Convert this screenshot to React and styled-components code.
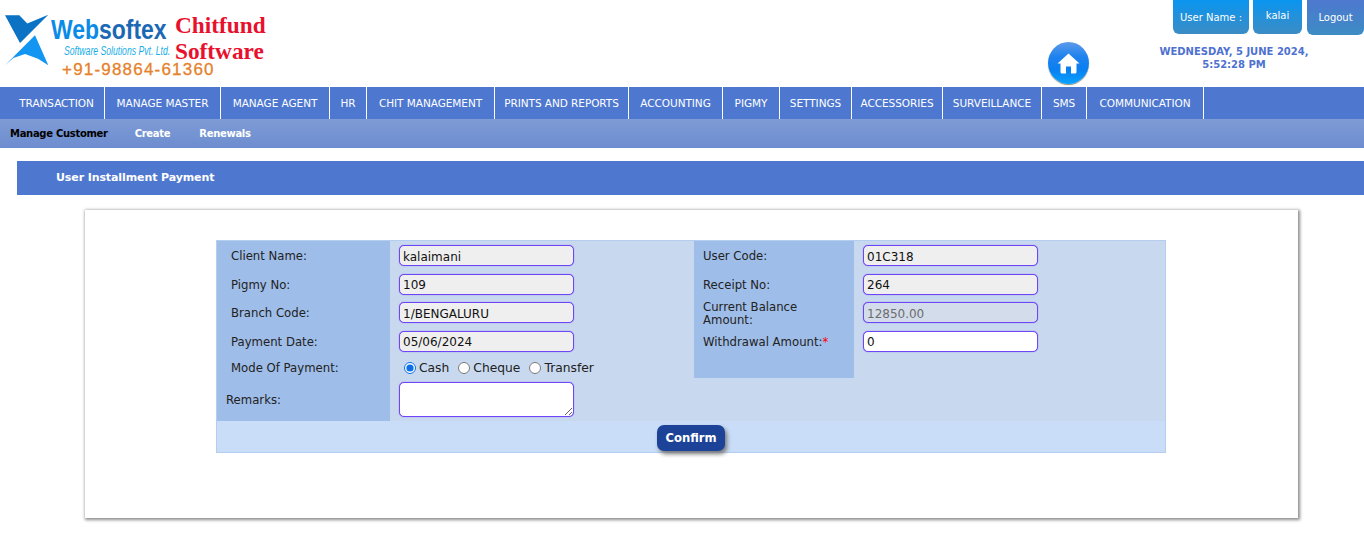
import React from 'react'
import styled, { createGlobalStyle } from 'styled-components'

const GlobalStyle = createGlobalStyle`
  html, body {
    margin: 0;
    padding: 0;
    background: #fff;
    font-family: 'DejaVu Sans', Verdana, sans-serif;
  }
  * {
    box-sizing: border-box;
  }
`

const Page = styled.div`
  width: 1364px;
  height: 534px;
  overflow: hidden;
`

const Header = styled.header`
  display: flex;
  height: 87px;
`

const Brand = styled.div`
  display: flex;
  width: 1048px;
  padding: 14px 0 0 5px;
`

const BrandCopy = styled.div`
  display: flex;
  flex-direction: column;
  width: 124px;
  white-space: nowrap;
`

const CompanyName = styled.div`
  margin-top: 2px;
  font: bold 27px/28px 'Liberation Sans', Arial, sans-serif;
  color: #0b8be8;
  transform: scaleX(0.85);
  transform-origin: left;

  span {
    color: #1b68b4;
  }
`

const Tagline = styled.div`
  margin: 1px 0 0 13px;
  font: italic 12px/13px 'Liberation Sans', Arial, sans-serif;
  color: #17aee8;
  transform: scaleX(0.72);
  transform-origin: left;
`

const Phone = styled.div`
  margin: 3px 0 0 11px;
  font: 17px/18px 'Liberation Sans', Arial, sans-serif;
  letter-spacing: 1.2px;
  -webkit-text-stroke: 0.3px #e6812a;
  color: #e6812a;
`

const ProductColumn = styled.div`
  margin-top: -2px;
`

const ProductName = styled.div`
  font: bold 23.3px/26px 'Liberation Serif', 'Times New Roman', serif;
  color: #e8112d;
`

const HomeLink = styled.div`
  width: 41px;
  height: 42px;
  margin-top: 42px;
  border-radius: 50%;
  display: flex;
  align-items: center;
  justify-content: center;
  background: linear-gradient(#5c9bea 0%, #1f82ee 35%, #0a7ff0 65%, #08a2ff 100%);
  box-shadow: 0 1px 1px #8a8a80;
`

const HeaderRight = styled.div`
  flex: 1;
  display: flex;
  flex-direction: column;
  align-items: flex-end;
`

const UserBar = styled.div`
  display: flex;
  align-items: flex-start;
`

const UserChip = styled.div`
  display: flex;
  justify-content: center;
  align-items: center;
  width: ${({ $width }) => $width}px;
  height: ${({ $logout }) => ($logout ? 35 : 34)}px;
  margin-left: ${({ $gap }) => $gap}px;
  padding-bottom: ${({ $lift }) => $lift || 0}px;
  border-radius: 0 0 6px 6px;
  font-size: 10px;
  color: #fff;
  background: ${({ $logout }) =>
    $logout ? 'linear-gradient(#4e78cf, #3c8cc4)' : 'linear-gradient(#0a95f0, #3c8cc4)'};
`

const DateTime = styled.div`
  width: 260px;
  margin: 10px 0 0 0;
  text-align: center;
  font-size: 10px;
  font-weight: 700;
  line-height: 13px;
  color: #4e71cf;
`

const Nav = styled.nav`
  display: flex;
  height: 32px;
  padding-left: 9px;
  background: #4e78cf;
`

const NavItem = styled.div`
  display: flex;
  align-items: center;
  justify-content: center;
  width: ${({ $width }) => $width}px;
  border-right: 1px solid #fff;
  font-size: 10.5px;
  letter-spacing: -0.05px;
  color: #fff;
  white-space: nowrap;
`

const SubNav = styled.div`
  display: flex;
  align-items: center;
  height: 29px;
  padding: 0 0 1px 10px;
  background: linear-gradient(#7f9bd5, #6c8dd0);
`

const SubNavItem = styled.div`
  margin-right: ${({ $gap }) => $gap}px;
  font-size: 10px;
  font-weight: 700;
  letter-spacing: -0.3px;
  color: ${({ $active }) => ($active ? '#000' : '#fff')};
`

const TitleBar = styled.div`
  display: flex;
  align-items: center;
  height: 34px;
  margin: 13px 0 0 17px;
  padding: 0 0 2px 39px;
  background: #4e78cf;
  font-size: 11px;
  font-weight: 700;
  letter-spacing: -0.1px;
  color: #fff;
`

const Card = styled.section`
  width: 1213px;
  height: 308px;
  margin: 15px 0 0 85px;
  padding: 30px 0 0 131px;
  background: #fff;
  box-shadow: 1px 1px 3px 1px #8c8c8c;
`

const FormTable = styled.div`
  width: 950px;
  border: 1px solid #b5cdee;
  background: #c8d9ef;
`

const FormBody = styled.div`
  display: flex;
  height: 180px;
`

const LeftLabels = styled.div`
  display: flex;
  flex-direction: column;
  width: 173px;
  background: #9fbde9;
`

const Fields = styled.div`
  display: flex;
  flex-direction: column;
  width: ${({ $width }) => $width}px;
  padding-left: 9px;
`

const RightLabels = styled.div`
  display: flex;
  flex-direction: column;
  width: 160px;
  height: 137px;
  background: #9fbde9;
`

const Label = styled.div`
  display: flex;
  align-items: center;
  height: ${({ $height }) => $height}px;
  padding: 2px 4px 0 ${({ $inset }) => $inset || 14}px;
  font-size: 11.7px;
  line-height: 13px;
  color: #222;

  em {
    font-style: normal;
    color: #f00;
  }
`

const RightLabel = styled(Label)`
  padding-left: 9px;
`

const FieldRow = styled.div`
  display: flex;
  align-items: center;
  height: ${({ $height }) => $height}px;
  padding-bottom: ${({ $lift }) => $lift || 0}px;
`

const TextInput = styled.input`
  width: 175px;
  height: 21px;
  padding: 2px 3px 0;
  border: 1px solid #6f45f5;
  border-radius: 5px;
  outline: none;
  background: ${({ $plain }) => ($plain ? '#fff' : '#efefef')};
  box-shadow: 0 0 1px #6f45f5;
  font-family: 'DejaVu Sans', Verdana, sans-serif;
  font-size: 12px;
  color: #111;

  &:disabled {
    background: #d3dcea;
    color: #6d6d6d;
  }
`

const RemarksInput = styled.textarea`
  display: block;
  width: 175px;
  height: 35px;
  padding: 2px 4px;
  border: 1px solid #6f45f5;
  border-radius: 5px;
  outline: none;
  background: #fff;
  box-shadow: 0 0 1px #6f45f5;
`

const RadioGroup = styled.div`
  display: flex;
  align-items: center;
  padding-left: 5px;
  font-size: 12.3px;
  color: #222;
`

const RadioOption = styled.label`
  display: flex;
  align-items: center;
  margin-right: 9px;

  input {
    width: 12px;
    height: 12px;
    margin: 0 3px 0 0;
    accent-color: #0a6fe8;
  }
`

const ActionRow = styled.div`
  display: flex;
  justify-content: center;
  height: 31px;
  padding: 4px 0 0 0;
  background: #c9ddf8;
`

const ConfirmButton = styled.button`
  width: 68px;
  height: 26px;
  padding: 0 0 1px;
  border: none;
  border-radius: 7px;
  background: #1c4398;
  box-shadow: 2px 3px 4px #777;
  font-family: 'DejaVu Sans', Verdana, sans-serif;
  font-size: 11.6px;
  font-weight: 700;
  color: #fff;
`

const navLinks = [
  ['TRANSACTION', 96],
  ['MANAGE MASTER', 116],
  ['MANAGE AGENT', 109],
  ['HR', 37],
  ['CHIT MANAGEMENT', 128],
  ['PRINTS AND REPORTS', 134],
  ['ACCOUNTING', 94],
  ['PIGMY', 57],
  ['SETTINGS', 72],
  ['ACCESSORIES', 91],
  ['SURVEILLANCE', 99],
  ['SMS', 45],
  ['COMMUNICATION', 117],
]

const rowHeights = [29, 28, 29, 28]

const LogoMark = () => (
  <svg width="46" height="53" viewBox="0 0 46 53">
    <path d="M0 1.3 H14.3 L22.3 9.5 L43.3 0.7 L30 14 L15 29 Z" fill="#0b72c4" />
    <path d="M0 51.3 L30 21.3 L43.3 51.3 L33 44.7 L20 40 L8.3 44 Z" fill="#1296f2" />
  </svg>
)

const HomeIcon = () => (
  <svg width="23" height="21" viewBox="0 0 23 21">
    <path
      d="M11.5 0.5 L22.5 10.5 L19.5 10.5 V19 Q19.5 20.5 18 20.5 H14 V13.5 H9 V20.5 H5 Q3.5 20.5 3.5 19 V10.5 L0.5 10.5 Z"
      fill="#fff"
    />
  </svg>
)

const App = () => (
  <Page>
    <GlobalStyle />
    <Header>
      <Brand>
        <LogoMark />
        <BrandCopy>
          <CompanyName>Web<span>softex</span></CompanyName>
          <Tagline>Software Solutions Pvt. Ltd.</Tagline>
          <Phone>+91-98864-61360</Phone>
        </BrandCopy>
        <ProductColumn>
          <ProductName>Chitfund</ProductName>
          <ProductName>Software</ProductName>
        </ProductColumn>
      </Brand>
      <HomeLink>
        <HomeIcon />
      </HomeLink>
      <HeaderRight>
        <UserBar>
          <UserChip $width={76}>User Name :</UserChip>
          <UserChip $width={49} $gap={4} $lift={4}>kalai</UserChip>
          <UserChip $width={57} $gap={5} $logout>Logout</UserChip>
        </UserBar>
        <DateTime>WEDNESDAY, 5 JUNE 2024,<br />5:52:28 PM</DateTime>
      </HeaderRight>
    </Header>

    <Nav>
      {navLinks.map(([name, width]) => (
        <NavItem key={name} $width={width}>{name}</NavItem>
      ))}
    </Nav>

    <SubNav>
      <SubNavItem $active $gap={27}>Manage Customer</SubNavItem>
      <SubNavItem $gap={29}>Create</SubNavItem>
      <SubNavItem>Renewals</SubNavItem>
    </SubNav>

    <TitleBar>User Installment Payment</TitleBar>

    <Card>
      <FormTable>
        <FormBody>
          <LeftLabels>
            <Label $height={rowHeights[0]}>Client Name:</Label>
            <Label $height={rowHeights[1]}>Pigmy No:</Label>
            <Label $height={rowHeights[2]}>Branch Code:</Label>
            <Label $height={rowHeights[3]}>Payment Date:</Label>
            <Label $height={25}>Mode Of Payment:</Label>
            <Label $height={39} $inset={9}>Remarks:</Label>
          </LeftLabels>
          <Fields $width={304}>
            <FieldRow $height={rowHeights[0]}><TextInput readOnly value="kalaimani" /></FieldRow>
            <FieldRow $height={rowHeights[1]}><TextInput readOnly value="109" /></FieldRow>
            <FieldRow $height={rowHeights[2]}><TextInput readOnly value="1/BENGALURU" /></FieldRow>
            <FieldRow $height={rowHeights[3]}><TextInput readOnly value="05/06/2024" /></FieldRow>
            <FieldRow $height={25}>
              <RadioGroup>
                <RadioOption><input type="radio" name="mode" defaultChecked />Cash</RadioOption>
                <RadioOption><input type="radio" name="mode" />Cheque</RadioOption>
                <RadioOption><input type="radio" name="mode" />Transfer</RadioOption>
              </RadioGroup>
            </FieldRow>
            <FieldRow $height={41} $lift={2}><RemarksInput /></FieldRow>
          </Fields>
          <RightLabels>
            <RightLabel $height={rowHeights[0]}>User Code:</RightLabel>
            <RightLabel $height={rowHeights[1]}>Receipt No:</RightLabel>
            <RightLabel $height={rowHeights[2]}>Current Balance Amount:</RightLabel>
            <RightLabel $height={rowHeights[3]}>Withdrawal Amount:<em>*</em></RightLabel>
          </RightLabels>
          <Fields $width={311}>
            <FieldRow $height={rowHeights[0]}><TextInput readOnly value="01C318" /></FieldRow>
            <FieldRow $height={rowHeights[1]}><TextInput readOnly value="264" /></FieldRow>
            <FieldRow $height={rowHeights[2]}><TextInput disabled value="12850.00" /></FieldRow>
            <FieldRow $height={rowHeights[3]}><TextInput readOnly $plain value="0" /></FieldRow>
          </Fields>
        </FormBody>
        <ActionRow>
          <ConfirmButton>Confirm</ConfirmButton>
        </ActionRow>
      </FormTable>
    </Card>
  </Page>
)

export default App
